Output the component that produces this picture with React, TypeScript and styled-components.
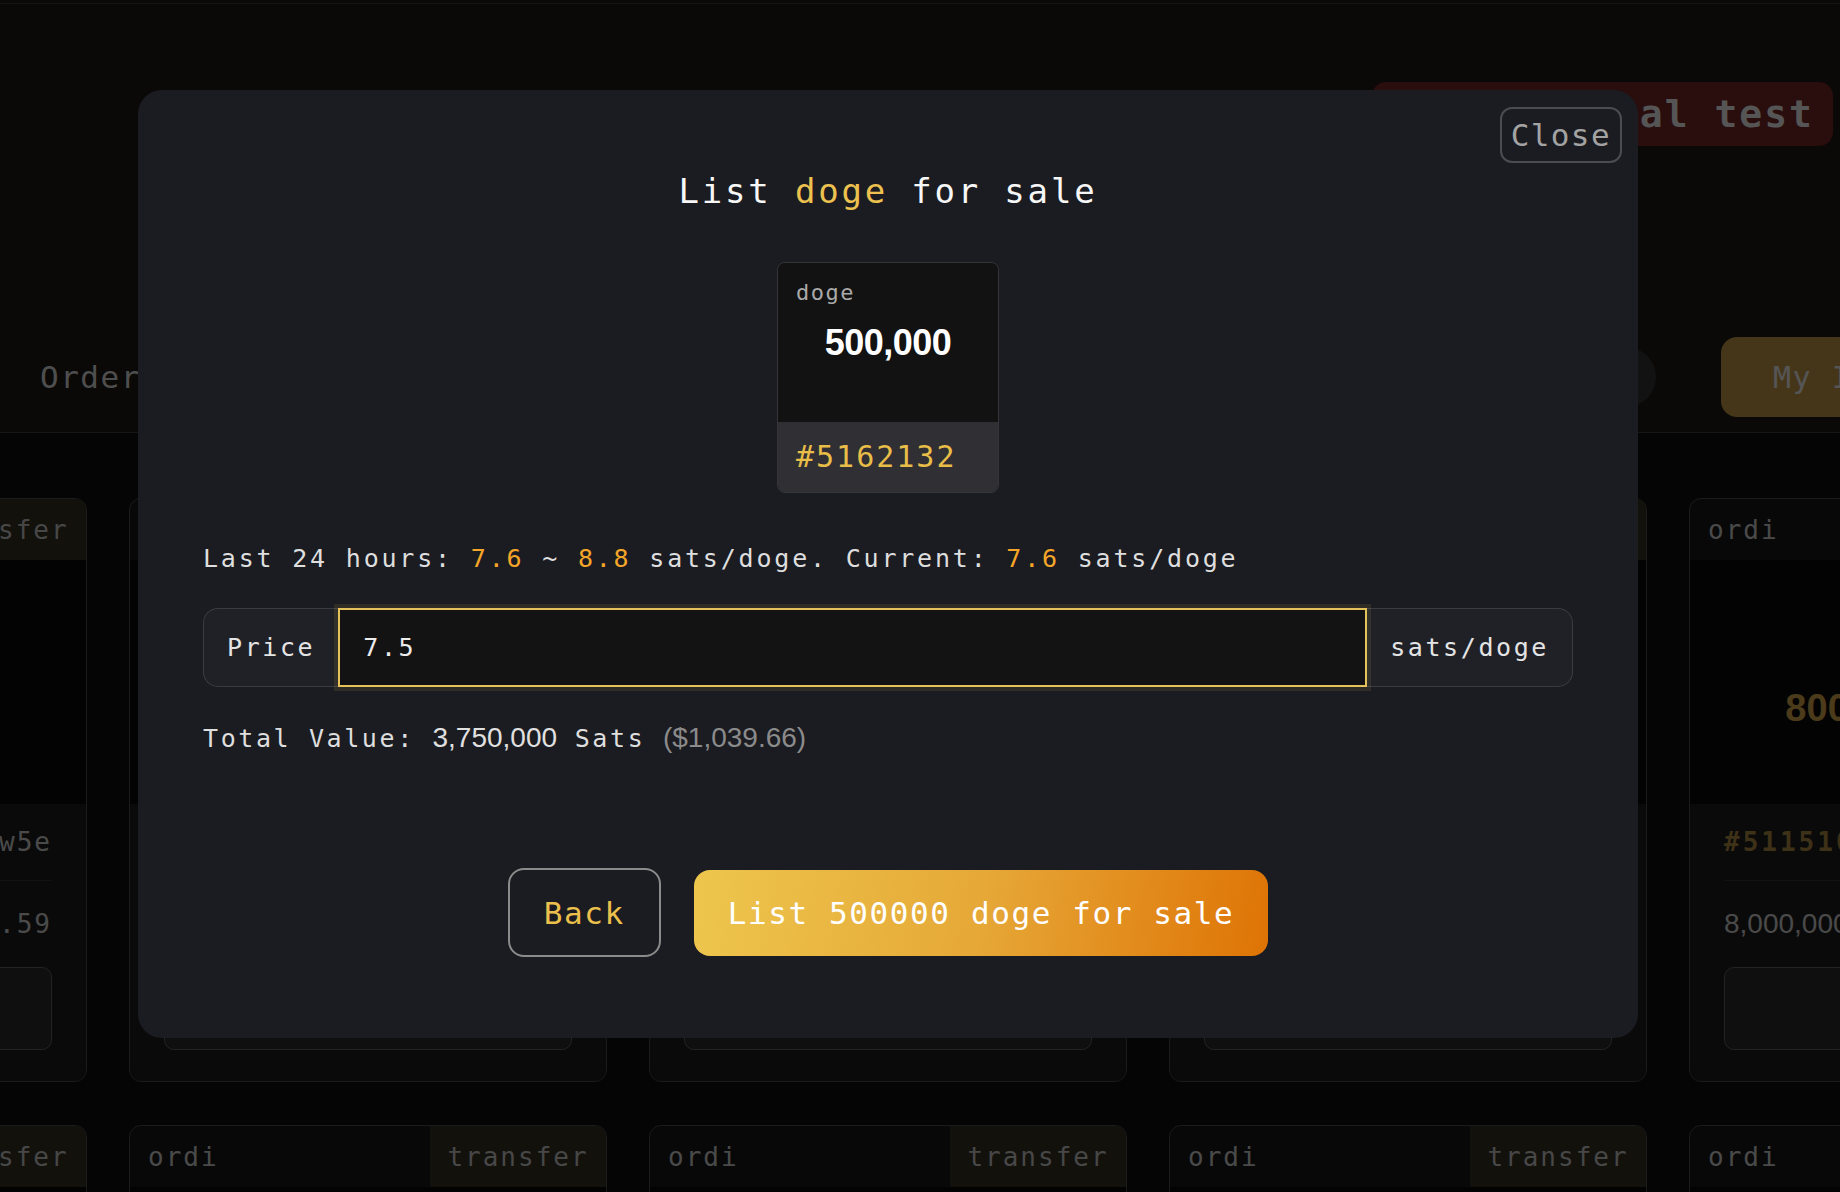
import styled, { createGlobalStyle } from "styled-components";

const mono = `"DejaVu Sans Mono", "Liberation Mono", monospace`;
const sans = `"Liberation Sans", Arial, sans-serif`;

const GlobalStyle = createGlobalStyle`
	html, body {
		margin: 0;
		padding: 0;
		overflow: hidden;
		background: #060606;
	}
`;

/* ---------- page behind the dialog ---------- */

const Page = styled.div`
	width: 1840px;
	height: 1192px;
	overflow: hidden;
	background: #0d0d0d;
	font-family: ${mono};
`;

const TopStrip = styled.div`
	height: 3px;
	background: #181410;
	border-bottom: 1px solid #2e2a26;
`;

const Masthead = styled.header`
	background: #181410;
	padding: 78px 0 15px;
	border-bottom: 1px solid #313131;
`;

const BadgeRow = styled.div`
	display: flex;
	justify-content: flex-end;
	padding-right: 7px;
`;

const Badge = styled.div`
	height: 64px;
	display: flex;
	align-items: center;
	padding: 0 19px;
	border-radius: 14px;
	background: #5e1d1d;
	color: #bdbdbd;
	font-size: 38px;
	font-weight: 700;
	letter-spacing: 2px;
`;

const Nav = styled.nav`
	display: grid;
	grid-template-columns: 1556px 60px auto;
	align-items: center;
	height: 80px;
	margin-top: 191px;
	padding-left: 40px;
`;

const Tab = styled.span`
	font-size: 31px;
	letter-spacing: 1.5px;
	color: #aeaeae;
`;

const Avatar = styled.div`
	width: 60px;
	height: 60px;
	border-radius: 50%;
	background: #282828;
`;

const MyButton = styled.div`
	height: 80px;
	margin-left: 65px;
	padding: 0 52px;
	display: flex;
	align-items: center;
	white-space: nowrap;
	border-radius: 16px;
	background: #9a783a;
	color: #bdbdbd;
	font-size: 30px;
	letter-spacing: 1.5px;
`;

const Grid = styled.section`
	display: grid;
	grid-template-columns: repeat(5, 478px);
	gap: 43px 42px;
	margin: 65px 0 0 -391px;
`;

const Card = styled.article`
	height: 584px;
	box-sizing: border-box;
	display: flex;
	flex-direction: column;
	border: 1px solid #3c3c3c;
	border-radius: 12px;
	overflow: hidden;
	background: #121212;
`;

const CardHead = styled.div`
	height: 61px;
	flex-shrink: 0;
	display: flex;
	align-items: center;
	justify-content: space-between;
	padding-left: 18px;
	font-size: 26px;
	letter-spacing: 2px;
	color: #a4a4a4;
`;

const Tag = styled.span`
	align-self: stretch;
	width: 176px;
	display: flex;
	align-items: center;
	justify-content: center;
	background: #28261b;
	color: #9e9e9e;
`;

const CardArt = styled.div`
	height: 244px;
	box-sizing: border-box;
	padding-top: 52px;
	flex-shrink: 0;
	display: flex;
	align-items: center;
	justify-content: center;
	background: #070707;
	color: #a9833a;
	font-family: ${sans};
	font-weight: 700;
	font-size: 38px;
	white-space: nowrap;
`;

const CardFoot = styled.div`
	flex: 1;
	display: flex;
	flex-direction: column;
	padding: 0 34px 33px;
	background: #181818;
`;

const FootRow = styled.div<{ $h: number; $rule?: boolean }>`
	height: ${p => p.$h}px;
	display: flex;
	align-items: center;
	justify-content: space-between;
	border-bottom: ${p => (p.$rule ? "1px solid #282828" : "none")};
	font-size: 26px;
	letter-spacing: 2px;
	color: #a4a4a4;
	white-space: nowrap;
`;

const Inscription = styled.span`
	color: #886d33;
	font-weight: 700;
	letter-spacing: 3px;
`;

const Amount = styled.span`
	font-family: ${sans};
	font-size: 28px;
	letter-spacing: 0;
`;

const ActionBox = styled.div`
	height: 83px;
	box-sizing: border-box;
	border: 1px solid #4e4e4e;
	border-radius: 10px;
	background: #222222;
`;

/* ---------- dialog ---------- */

const Overlay = styled.div`
	position: fixed;
	inset: 0;
	box-sizing: border-box;
	padding: 90px 64px 0 0;
	display: flex;
	justify-content: center;
	align-items: flex-start;
	background: rgba(0, 0, 0, 0.55);
`;

const Modal = styled.div`
	position: relative;
	width: 1500px;
	box-sizing: border-box;
	padding: 81px 65px 81px;
	display: flex;
	flex-direction: column;
	border-radius: 24px;
	background: #1b1c21;
	font-family: ${mono};
	color: #dedede;
`;

const CloseButton = styled.button`
	position: absolute;
	top: 17px;
	right: 16px;
	height: 56px;
	padding: 0 9px;
	border: 2px solid #4b4c50;
	border-radius: 12px;
	background: transparent;
	color: #a3a3a3;
	font-family: ${mono};
	font-size: 31px;
	letter-spacing: 1.4px;
`;

const Title = styled.h2`
	margin: 0;
	text-align: center;
	font-size: 34px;
	line-height: 40px;
	font-weight: 400;
	letter-spacing: 2.8px;
	color: #f7f7f7;
`;

const Accent = styled.span<{ $tone: "yellow" | "orange" }>`
	color: ${p => (p.$tone === "yellow" ? "#ecc14f" : "#f5a628")};
`;

const TokenCard = styled.div`
	align-self: center;
	width: 222px;
	margin-top: 51px;
	box-sizing: border-box;
	border: 1px solid #35363a;
	border-radius: 8px;
	overflow: hidden;
`;

const TokenTop = styled.div`
	height: 159px;
	box-sizing: border-box;
	padding: 17px 18px 0;
	display: flex;
	flex-direction: column;
	background: #121212;
`;

const TokenTick = styled.span`
	font-size: 22px;
	line-height: 26px;
	letter-spacing: 1.5px;
	color: #a9a9a9;
`;

const TokenAmount = styled.span`
	margin-top: 17px;
	text-align: center;
	font-family: ${sans};
	font-weight: 700;
	font-size: 36px;
	line-height: 40px;
	letter-spacing: -0.5px;
	color: #ffffff;
`;

const TokenBottom = styled.div`
	height: 70px;
	box-sizing: border-box;
	padding: 17px 18px;
	background: #2f2f34;
	font-size: 30px;
	line-height: 36px;
	letter-spacing: 2px;
	color: #e8bd48;
`;

const InfoLine = styled.p`
	margin: 51px 0 0;
	font-size: 25px;
	line-height: 30px;
	letter-spacing: 2.8px;
	white-space: nowrap;
`;

const PriceGroup = styled.div`
	display: flex;
	height: 79px;
	margin-top: 34px;
	font-size: 25px;
	letter-spacing: 2.6px;
`;

const Addon = styled.span<{ $side: "left" | "right" }>`
	display: flex;
	align-items: center;
	padding: 0 23px;
	background: #202127;
	border: 1px solid #3b3c41;
	${p => (p.$side === "left" ? "border-right: none;" : "border-left: none;")}
	border-radius: ${p => (p.$side === "left" ? "15px 0 0 15px" : "0 15px 15px 0")};
	color: #e4e4e4;
`;

const PriceInput = styled.input`
	position: relative;
	z-index: 1;
	flex: 1;
	min-width: 0;
	box-sizing: border-box;
	height: 79px;
	padding: 0 23px;
	border: 2px solid #e5c25a;
	border-radius: 0;
	outline: none;
	background: #131313;
	box-shadow: 0 0 0 4px rgba(229, 194, 90, 0.1);
	color: #ececec;
	font-family: ${mono};
	font-size: 25px;
	letter-spacing: 2.6px;
`;

const TotalLine = styled.p`
	margin: 36px 0 0;
	font-size: 25px;
	line-height: 30px;
	letter-spacing: 2.6px;
	white-space: nowrap;
`;

const Figure = styled.span<{ $muted?: boolean }>`
	font-family: ${sans};
	font-size: 28px;
	letter-spacing: 0;
	color: ${p => (p.$muted ? "#8b8b8b" : "#e0e0e0")};
`;

const Actions = styled.div`
	display: flex;
	justify-content: center;
	align-items: center;
	gap: 33px;
	margin-top: 114px;
`;

const BackButton = styled.button`
	height: 89px;
	padding: 0 34px;
	border: 2px solid #8b8b8b;
	border-radius: 16px;
	background: transparent;
	color: #ebc04c;
	font-family: ${mono};
	font-size: 31px;
	letter-spacing: 1.6px;
`;

const ListButton = styled.button`
	height: 86px;
	padding: 0 34px;
	border: none;
	border-radius: 16px;
	background: linear-gradient(100deg, #edc64e 0%, #e6a837 50%, #de7305 100%);
	color: #ffffff;
	font-family: ${mono};
	font-size: 31px;
	letter-spacing: 1.6px;
`;

type CardData = {
	tag: boolean;
	big: string;
	inscription: string;
	address: string;
	amount: string;
	price: string;
};

const card: CardData = {
	tag: true,
	big: "800,000,000,000",
	inscription: "#5115105",
	address: "bc1p...w5e",
	amount: "8,000,000",
	price: "$2,689.59",
};

const rowOne: CardData[] = [card, card, card, card, { ...card, tag: false }];
const rowTwo: CardData[] = [card, card, card, card, { ...card, tag: false }];

function ListingCard({ data }: { data: CardData }) {
	return (
		<Card>
			<CardHead>
				<span>ordi</span>
				{data.tag && <Tag>transfer</Tag>}
			</CardHead>
			<CardArt>{data.big}</CardArt>
			<CardFoot>
				<FootRow $h={76} $rule>
					<Inscription>{data.inscription}</Inscription>
					<span>{data.address}</span>
				</FootRow>
				<FootRow $h={86}>
					<Amount>{data.amount}</Amount>
					<span>{data.price}</span>
				</FootRow>
				<ActionBox />
			</CardFoot>
		</Card>
	);
}

function App() {
	return (
		<>
			<GlobalStyle />
			<Page>
				<TopStrip />
				<Masthead>
					<BadgeRow>
						<Badge>Experimental test</Badge>
					</BadgeRow>
					<Nav>
						<Tab>Orders</Tab>
						<Avatar />
						<MyButton>My Inscriptions</MyButton>
					</Nav>
				</Masthead>
				<Grid>
					{[...rowOne, ...rowTwo].map((c, i) => (
						<ListingCard key={i} data={c} />
					))}
				</Grid>
			</Page>

			<Overlay>
				<Modal>
					<CloseButton>Close</CloseButton>
					<Title>
						List <Accent $tone="yellow">doge</Accent> for sale
					</Title>

					<TokenCard>
						<TokenTop>
							<TokenTick>doge</TokenTick>
							<TokenAmount>500,000</TokenAmount>
						</TokenTop>
						<TokenBottom>#5162132</TokenBottom>
					</TokenCard>

					<InfoLine>
						Last 24 hours: <Accent $tone="orange">7.6</Accent> ~ <Accent $tone="orange">8.8</Accent> sats/doge.
						Current: <Accent $tone="orange">7.6</Accent> sats/doge
					</InfoLine>

					<PriceGroup>
						<Addon $side="left">Price</Addon>
						<PriceInput defaultValue="7.5" />
						<Addon $side="right">sats/doge</Addon>
					</PriceGroup>

					<TotalLine>
						Total Value: <Figure>3,750,000</Figure> Sats <Figure $muted>($1,039.66)</Figure>
					</TotalLine>

					<Actions>
						<BackButton>Back</BackButton>
						<ListButton>List 500000 doge for sale</ListButton>
					</Actions>
				</Modal>
			</Overlay>
		</>
	);
}

export default App;
